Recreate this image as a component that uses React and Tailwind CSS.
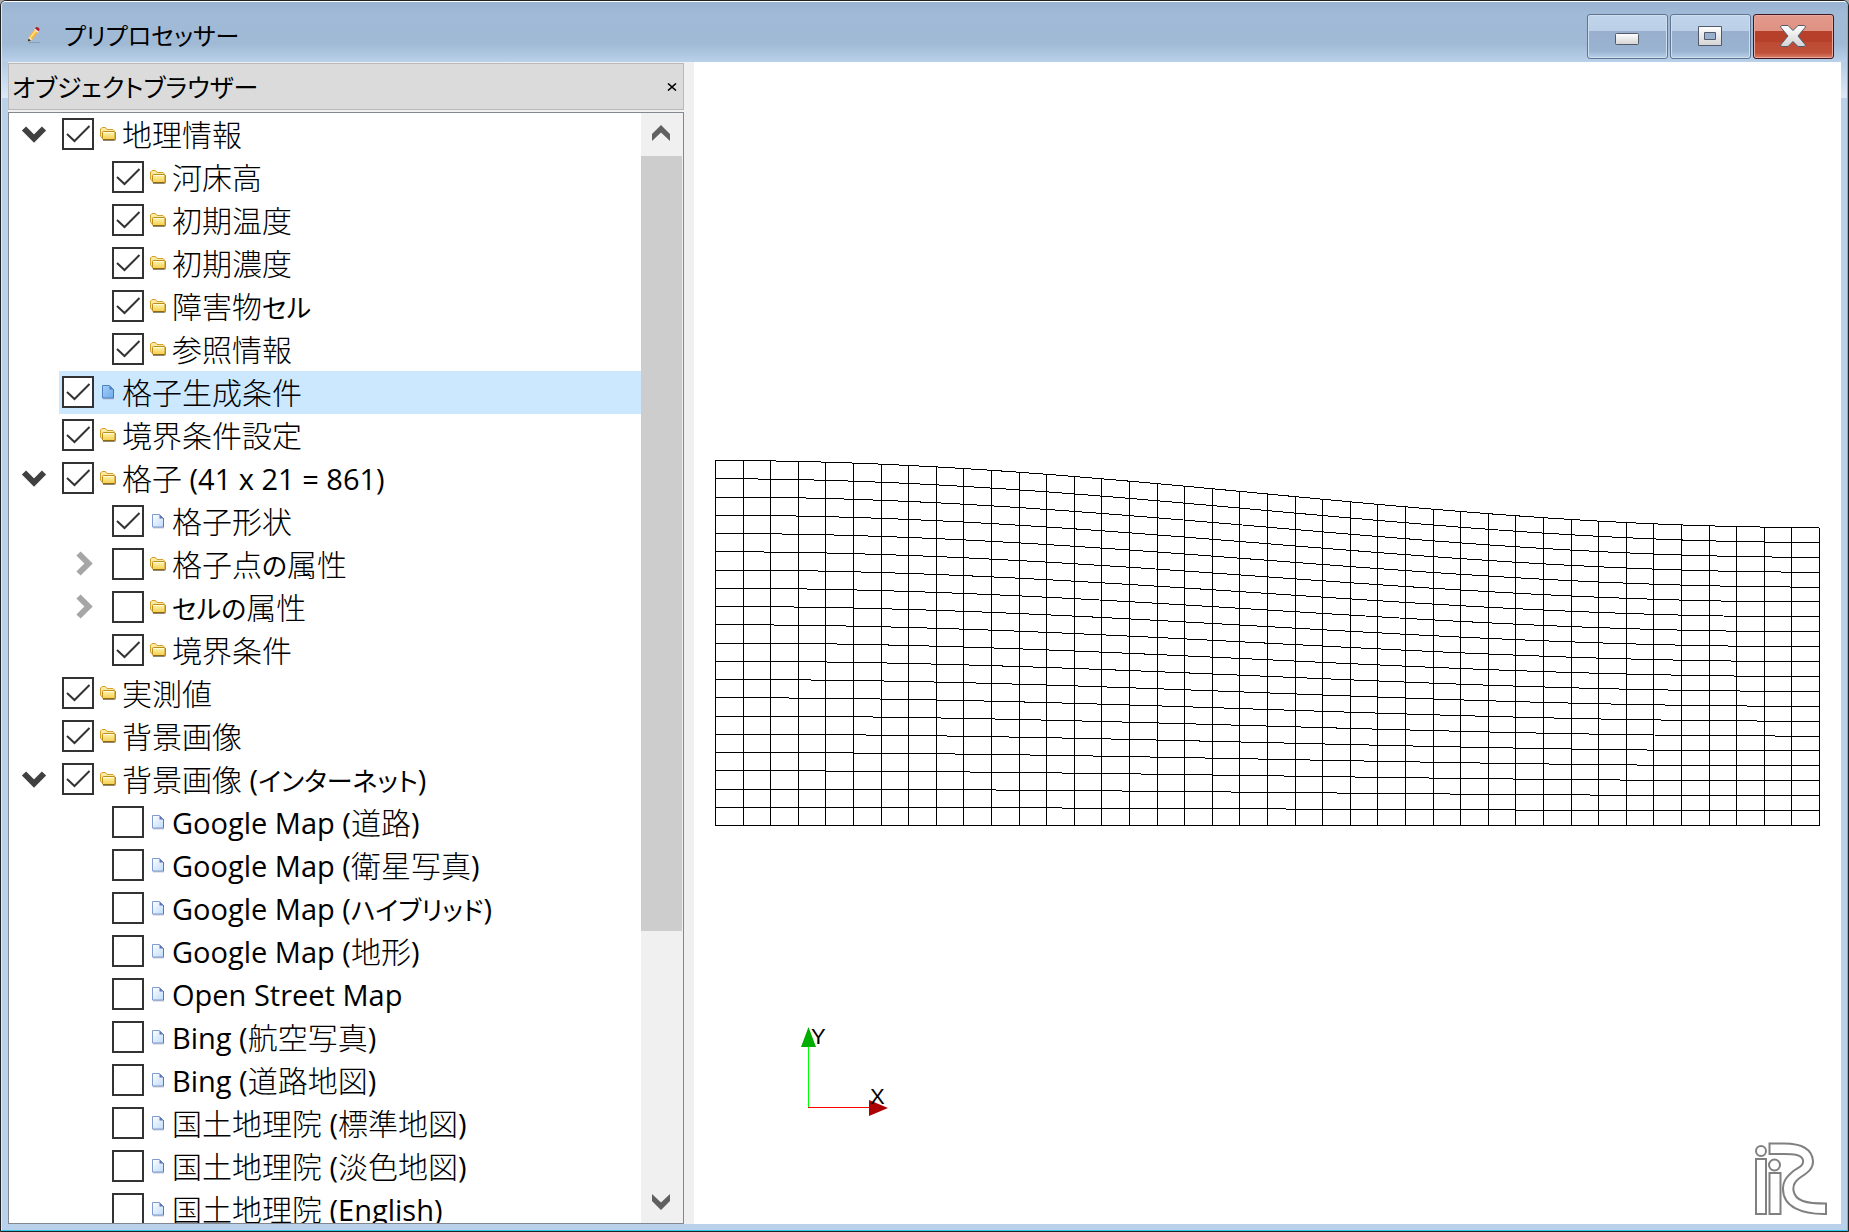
import React from "react";

const TREE = [
  { level: 0, label: "地理情報", icon: "folder", checked: true, branch: "open" },
  { level: 1, label: "河床高", icon: "folder", checked: true },
  { level: 1, label: "初期温度", icon: "folder", checked: true },
  { level: 1, label: "初期濃度", icon: "folder", checked: true },
  { level: 1, label: "障害物セル", icon: "folder", checked: true },
  { level: 1, label: "参照情報", icon: "folder", checked: true },
  { level: 0, label: "格子生成条件", icon: "bluePage", checked: true, selected: true },
  { level: 0, label: "境界条件設定", icon: "folder", checked: true },
  { level: 0, label: "格子 (41 x 21 = 861)", icon: "folder", checked: true, branch: "open" },
  { level: 1, label: "格子形状", icon: "page", checked: true },
  { level: 1, label: "格子点の属性", icon: "folder", checked: false, branch: "closed" },
  { level: 1, label: "セルの属性", icon: "folder", checked: false, branch: "closed" },
  { level: 1, label: "境界条件", icon: "folder", checked: true },
  { level: 0, label: "実測値", icon: "folder", checked: true },
  { level: 0, label: "背景画像", icon: "folder", checked: true },
  { level: 0, label: "背景画像 (インターネット)", icon: "folder", checked: true, branch: "open" },
  { level: 1, label: "Google Map (道路)", icon: "page", checked: false },
  { level: 1, label: "Google Map (衛星写真)", icon: "page", checked: false },
  { level: 1, label: "Google Map (ハイブリッド)", icon: "page", checked: false },
  { level: 1, label: "Google Map (地形)", icon: "page", checked: false },
  { level: 1, label: "Open Street Map", icon: "page", checked: false },
  { level: 1, label: "Bing (航空写真)", icon: "page", checked: false },
  { level: 1, label: "Bing (道路地図)", icon: "page", checked: false },
  { level: 1, label: "国土地理院 (標準地図)", icon: "page", checked: false },
  { level: 1, label: "国土地理院 (淡色地図)", icon: "page", checked: false },
  { level: 1, label: "国土地理院 (English)", icon: "page", checked: false },
];

function Gradients() {
  return (
    <svg width="0" height="0" className="absolute" aria-hidden="true">
      <defs>
        <linearGradient id="folderFill" x1="0" y1="0" x2="0" y2="1">
          <stop offset="0" stopColor="#fff6b0" />
          <stop offset="1" stopColor="#f3cd50" />
        </linearGradient>
        <linearGradient id="pageFill" x1="0" y1="0" x2="1" y2="1">
          <stop offset="0" stopColor="#ffffff" />
          <stop offset="1" stopColor="#bfdcfb" />
        </linearGradient>
        <linearGradient id="bluePageFill" x1="0" y1="0" x2="1" y2="1">
          <stop offset="0" stopColor="#a5cff6" />
          <stop offset="1" stopColor="#6fabec" />
        </linearGradient>
        <linearGradient id="glyphFill" x1="0" y1="0" x2="0" y2="1">
          <stop offset="0" stopColor="#ffffff" />
          <stop offset="1" stopColor="#d4d4d4" />
        </linearGradient>
      </defs>
    </svg>
  );
}

function ItemIcon({ kind }) {
  if (kind === "folder") {
    return (
      <svg width="16" height="16" viewBox="0 0 16 16" className="shrink-0" aria-hidden="true">
        <path d="M3 14.500h11.500q1 0 1-1V6" fill="none" stroke="#8e8877" strokeWidth="1" />
        <path d="M2.500 12.500.5 10V3L2 1.500h3.500L7 3.500h6l1 1V6.500L12 12.500z" fill="#fbeaa0" stroke="#d3a02c" />
        <path d="M3.500 5.500h10.500a1 1 0 0 1 1 1v6a1 1 0 0 1-1 1H3.500a1 1 0 0 1-1-1V6.500a1 1 0 0 1 1-1z" fill="url(#folderFill)" stroke="#c08c1a" />
        <path d="M3.500 6.500h10.500" stroke="#fffde0" />
        <path d="M3 13.500h11.500" stroke="#94690c" />
      </svg>
    );
  }
  const blue = kind === "bluePage";
  return (
    <svg width="16" height="16" viewBox="0 0 16 16" className="shrink-0" aria-hidden="true">
      <path d="M3 14.800h11" stroke="#a3a8b8" strokeWidth="1" />
      <path
        d="M2.500 1.500h7l4 4v8.500h-11z"
        fill={blue ? "url(#bluePageFill)" : "url(#pageFill)"}
        stroke={blue ? "#4f82c4" : "#7f9bd3"}
      />
      <path d="M9.500 1.500v4h4z" fill={blue ? "#4b80c8" : "#5e74b4"} />
      <path d="M13.500 5v9" stroke={blue ? "#4b78b8" : "#6573b0"} />
    </svg>
  );
}

function Branch({ state }) {
  if (!state) return <span className="w-[50px] shrink-0" />;
  const open = state === "open";
  return (
    <button
      type="button"
      aria-label={open ? "折りたたむ" : "展開"}
      className="flex w-[50px] shrink-0 items-center justify-center pb-px"
    >
      <svg width="28" height="28" viewBox="0 0 28 28" aria-hidden="true">
        {open ? (
          <path d="M4 8.500 14 18.500 24 8.500" fill="none" stroke="#404040" strokeWidth="6" />
        ) : (
          <path d="M8.500 3.500 18.500 13.500 8.500 23.500" fill="none" stroke="#a6a6a6" strokeWidth="6" />
        )}
      </svg>
    </button>
  );
}

const RUNS = /[\u3041-\u30ff]+|[\u0020-\u007e]+|[^\u0020-\u007e\u3041-\u30ff]+/g;

function ItemText({ text }) {
  return (
    <span className="pt-[2px]">
      {text.match(RUNS).map((run, i) => {
        if (/[\u3041-\u30ff]/.test(run)) {
          return <span key={i} className="text-[26px]">{run}</span>;
        }
        if (/[\u0020-\u007e]/.test(run)) {
          return <span key={i} className="text-[29px]">{run}</span>;
        }
        return <span key={i} className="font-light">{run}</span>;
      })}
    </span>
  );
}

function TreeRow({ item }) {
  const id = React.useId();
  return (
    <li className={item.level === 1 ? "flex h-[43px] pl-[50px]" : "flex h-[43px]"}>
      <Branch state={item.branch} />
      <div
        className={
          item.selected
            ? "flex flex-1 items-center bg-[#cce8ff] pb-px pl-[3px]"
            : "flex flex-1 items-center pb-px pl-[3px]"
        }
      >
        <span className="grid size-8 shrink-0">
          <input
            id={id}
            type="checkbox"
            defaultChecked={item.checked}
            className="peer col-start-1 row-start-1 size-8 appearance-none border-2 border-[#333333] bg-white"
          />
          <svg
            viewBox="0 0 32 32"
            className="pointer-events-none invisible col-start-1 row-start-1 size-8 peer-checked:visible"
            aria-hidden="true"
          >
            <path d="M5 16 12.500 23 27.500 8" fill="none" stroke="#333333" strokeWidth="2" />
          </svg>
        </span>
        <label htmlFor={id} className="flex items-center gap-[6px] pl-[6px] text-[30px] leading-[40px] whitespace-nowrap">
          <ItemIcon kind={item.icon} />
          <ItemText text={item.label} />
        </label>
      </div>
    </li>
  );
}

function CaptionButton({ label, danger, children }) {
  return (
    <button
      type="button"
      aria-label={label}
      className={
        danger
          ? "flex h-[45px] w-[81px] items-center justify-center rounded-[3px] border border-[#431422] bg-[linear-gradient(#e39a8c_0%,#de9182_37%,#b7402a_38%,#b7402a_62%,#bd4a34_64%,#c05039_88%,#d9806c_100%)] pr-px pb-px shadow-[inset_0_0_0_1px_#e9a99d]"
          : "flex h-[45px] w-[81px] items-center justify-center rounded-[3px] border border-[#5f7592] bg-[linear-gradient(#c0d4ea_0%,#bbd0e7_37%,#98b0cd_38%,#9ab3d0_84%,#b9d1ea_100%)] pr-px pb-px shadow-[inset_0_0_0_1px_#cfdff0]"
      }
    >
      {children}
    </button>
  );
}

function TitleBar() {
  return (
    <header className="flex h-[60px] shrink-0 justify-between bg-[linear-gradient(#99b3d2_0%,#a0bad7_20%,#a0bad6_70%,#b9d1ea_100%)] pr-[13px]">
      <div className="flex items-center gap-[22px] pt-[6px] pl-[24px]">
        <svg width="16" height="18" viewBox="0 0 16 18" aria-hidden="true">
          <path d="M3 16.500h11" stroke="#8195ad" strokeWidth="1" opacity=".7" />
          <path d="M2 15.500 3 10.500 8.500 3 12.500 5.800 6.500 13.500z" fill="#f4b63c" />
          <path d="M4.500 11.500 10 4.500" stroke="#ffe08a" strokeWidth="1.500" />
          <path d="M2 15.500 3 10.500 6.500 13.500z" fill="#f3dfbd" />
          <path d="M2 15.500 2.500 12.500 4.800 14.400z" fill="#222222" />
          <path d="M8 3.700 9.200 2.200 12.900 5.200 11.800 6.700z" fill="#e6e4e6" />
          <path d="M9 2.500 10.200 1Q13.200 .8 13.600 3.800L12.600 5.200z" fill="#b3202c" />
        </svg>
        <h1 className="pt-[2px] text-[24px] leading-[36px]">プリプロセッサー</h1>
      </div>
      <div className="flex gap-[2px] pt-[12px]">
        <CaptionButton label="最小化">
          <svg width="28" height="28" viewBox="0 0 28 28" aria-hidden="true">
            <rect x="2.500" y="11.500" width="23" height="11" rx="1" fill="url(#glyphFill)" stroke="#525a6b" />
          </svg>
        </CaptionButton>
        <CaptionButton label="最大化">
          <svg width="28" height="28" viewBox="0 0 28 28" aria-hidden="true">
            <path
              d="M2.500 4.500h23v19h-23zM8.500 10.500v7h11v-7z"
              fill="url(#glyphFill)"
              fillRule="evenodd"
              stroke="#525a6b"
              strokeLinejoin="round"
            />
          </svg>
        </CaptionButton>
        <CaptionButton label="閉じる" danger>
          <svg width="28" height="28" viewBox="0 0 28 28" aria-hidden="true">
            <path
              d="M2.500 3.500h6.500L14 8.500 19 3.500h6.500L26.500 5 19 14 26.500 23 25.500 24.500H19L14 19.500 9 24.500H2.500L1.500 23 9 14 1.500 5z"
              fill="url(#glyphFill)"
              stroke="#525a6b"
              strokeLinejoin="round"
            />
          </svg>
        </CaptionButton>
      </div>
    </header>
  );
}

function ScrollBar() {
  return (
    <div className="flex w-[42px] shrink-0 flex-col bg-[#f0f0f0] pr-px">
      <button type="button" aria-label="上へスクロール" className="flex h-[43px] shrink-0 items-center justify-center pr-px pb-[3px]">
        <svg width="18" height="16" viewBox="0 0 18 16" aria-hidden="true">
          <path d="M0 9 9 0 18 9V16L9 7.500 0 16z" fill="#606060" />
        </svg>
      </button>
      <div className="flex min-h-0 flex-1 flex-col">
        <div className="h-[75.7%] bg-[#cdcdcd]" />
      </div>
      <button type="button" aria-label="下へスクロール" className="flex h-[43px] shrink-0 items-center justify-center pr-px">
        <svg width="18" height="16" viewBox="0 0 18 16" aria-hidden="true">
          <path d="M0 7 9 16 18 7V0L9 8.500 0 0z" fill="#606060" />
        </svg>
      </button>
    </div>
  );
}

function ObjectBrowser() {
  return (
    <aside className="flex w-[676px] shrink-0 flex-col gap-[2px] pt-px">
      <div className="flex h-[47px] shrink-0 items-center justify-between border border-[#b9b9b9] bg-[#dbdbdb] pr-[6px] pl-[3px]">
        <h2 className="text-[25px] leading-[36px]">オブジェクトブラウザー</h2>
        <button type="button" aria-label="パネルを閉じる">
          <svg width="10" height="8" viewBox="0 0 10 8" aria-hidden="true">
            <path d="M1 .5 9 7.500M9 .5 1 7.500" stroke="#000000" strokeWidth="1.600" />
          </svg>
        </button>
      </div>
      <div className="flex min-h-0 flex-1 border border-[#828790] bg-white">
        <ul className="min-w-0 flex-1 overflow-hidden">
          {TREE.map((item) => (
            <TreeRow key={item.label} item={item} />
          ))}
        </ul>
        <ScrollBar />
      </div>
    </aside>
  );
}

const COLS = 41;
const ROWS = 21;

function gridPoint(i, j) {
  const x = 21.5 + (1104 * i) / (COLS - 1);
  const drop = (67 * (1 - Math.cos((Math.PI * i) / (COLS - 1)))) / 2;
  const top = 398.5 + drop;
  return `${x.toFixed(2)},${(top + ((763.5 - top) * j) / (ROWS - 1)).toFixed(2)}`;
}

function MeshView() {
  const columns = Array.from({ length: COLS }, (_, i) => `M${gridPoint(i, 0)}L${gridPoint(i, ROWS - 1)}`);
  const rows = Array.from(
    { length: ROWS },
    (_, j) => "M" + Array.from({ length: COLS }, (_, i) => gridPoint(i, j)).join("L")
  );
  return (
    <main className="relative min-w-0 flex-1 bg-white">
      <svg viewBox="0 0 1147 1162" className="block h-full w-full" role="img" aria-label="格子">
        <path d={columns.join("") + rows.join("")} fill="none" stroke="#000000" strokeWidth="1" shapeRendering="crispEdges" />
      </svg>
      <svg width="96" height="96" viewBox="0 0 96 96" className="absolute bottom-[104px] left-[104px]" role="img" aria-label="座標軸">
        <path d="M10.500 23V83" stroke="#00ff00" shapeRendering="crispEdges" />
        <path d="M10 83.500H72" stroke="#ff0000" shapeRendering="crispEdges" />
        <path d="M10.500 3 18 23H3z" fill="#00ad00" />
        <path d="M90 84 71 76V92z" fill="#ad0000" />
        <text x="13" y="20" fontSize="22" fontFamily="Liberation Sans, sans-serif">Y</text>
        <text x="72" y="80" fontSize="22" fontFamily="Liberation Sans, sans-serif">X</text>
      </svg>
      <svg
        width="74"
        height="76"
        viewBox="0 0 74 76"
        className="absolute right-[13px] bottom-[7px]"
        fill="none"
        stroke="#808080"
        strokeWidth="2"
        role="img"
        aria-label="iRIC"
      >
        <circle cx="7" cy="10" r="5" />
        <path d="M2 18h10v55H2z" />
        <circle cx="20.500" cy="24" r="5.500" />
        <path d="M15.500 32h11v41h-11z" />
        <path d="M15.500 2.500H30C47 2.500 58 8 59 20C59.500 29 51 33 45 37.500C39.500 41.500 39 46 39.500 49.500C41 60 52 62.500 72 62.500V73C48 73.500 29 66 29 48C29 39 34 34.500 40 29.500C45 26 50 24.500 49 19C47.500 13 38 13 30 13H15.500z" />
      </svg>
    </main>
  );
}

function FrameSide() {
  return (
    <div className="w-[6px] shrink-0">
      <div className="h-[36px] bg-[linear-gradient(#b4cce6,#dce9f7)]" />
    </div>
  );
}

export default function App() {
  return (
    <div className="h-screen overflow-hidden bg-[#a8a8a8] font-['Open_Sans','Noto_Sans_CJK_JP',sans-serif] text-black [font-feature-settings:'palt']">
      <Gradients />
      <div className="flex h-full flex-col rounded-t-[6px] border border-[#222222] bg-[#b9d1ea]">
        <div className="flex min-h-0 flex-1 flex-col overflow-hidden rounded-t-[5px] border border-t-white border-r-[#30d0f0] border-b-[#30c8ea] border-l-[#dceaf8]">
          <TitleBar />
          <div className="flex min-h-0 flex-1 pb-[6px]">
            <FrameSide />
            <div className="flex min-w-0 flex-1 bg-[#f0f0f0]">
              <ObjectBrowser />
              <div className="w-[10px] shrink-0" />
              <MeshView />
            </div>
            <FrameSide />
          </div>
        </div>
      </div>
    </div>
  );
}
